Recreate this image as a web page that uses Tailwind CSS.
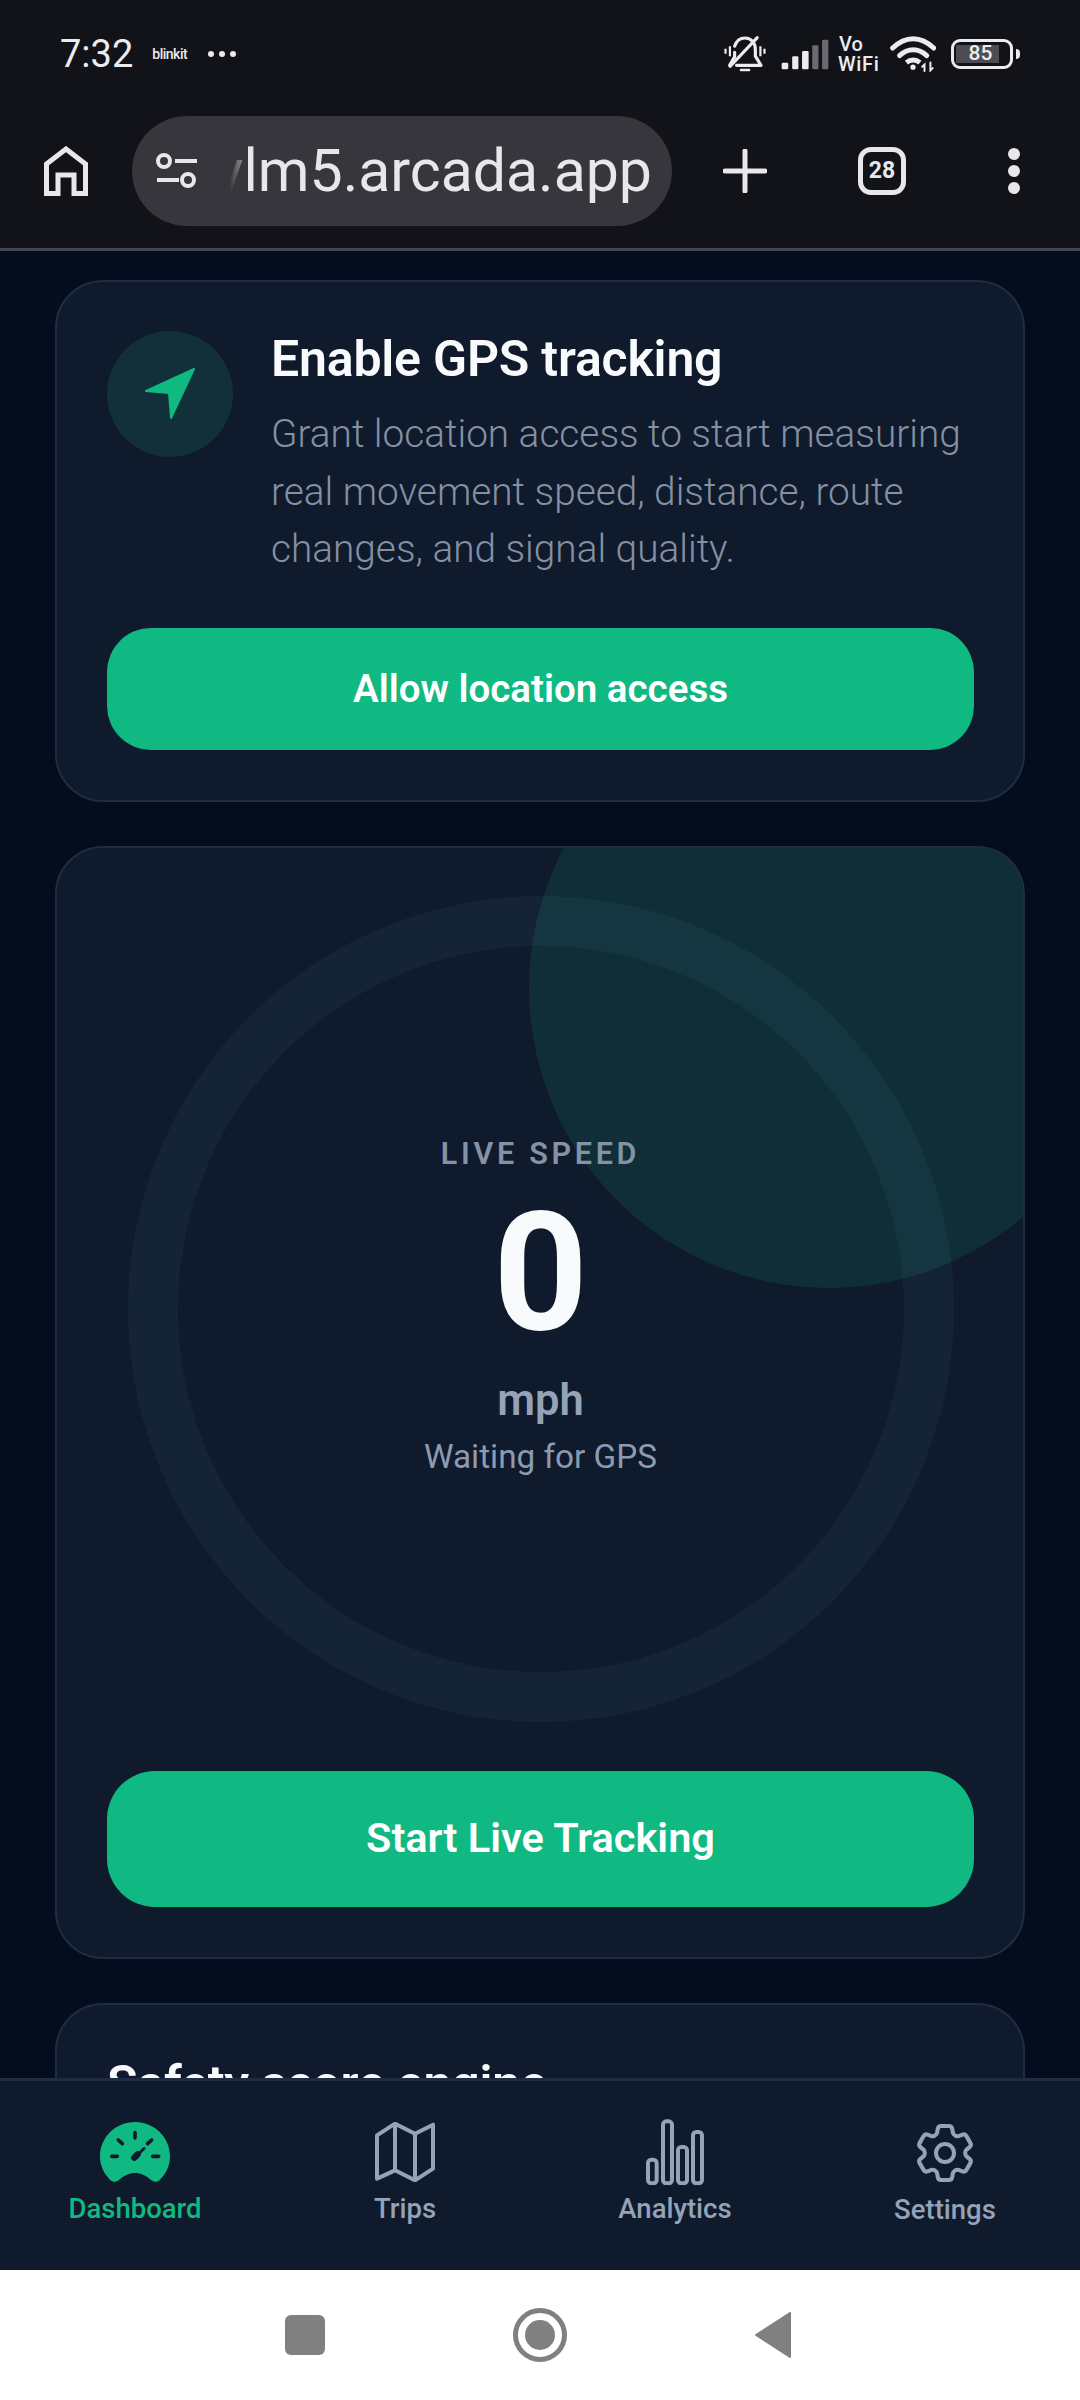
<!DOCTYPE html>
<html lang="en">
  <head>
    <meta charset="UTF-8" />
    <meta name="viewport" content="width=device-width, initial-scale=1.0" />
    <title>Dashboard</title>
    <script src="https://cdn.jsdelivr.net/npm/@tailwindcss/browser@4"></script>
  </head>
  <body class="bg-white">
    <div class="flex h-[2400px] w-[1080px] flex-col overflow-hidden font-[Roboto,sans-serif]">
      <!-- STATUS BAR -->
      <div class="box-border flex h-[100px] shrink-0 items-center bg-[#121318] pt-[8px] pl-[60px] text-[#ececee]">
        <span class="text-[38px] leading-none">7:32</span>
        <span class="ml-[19px] text-[14px] font-medium tracking-[-0.5px]">blinkit</span>
        <div class="ml-[21px] flex gap-[5px]">
          <span class="size-[6px] rounded-full bg-[#ececee]"></span>
          <span class="size-[6px] rounded-full bg-[#ececee]"></span>
          <span class="size-[6px] rounded-full bg-[#ececee]"></span>
        </div>
        <svg class="ml-auto" width="44" height="38" viewBox="365 105 140 120" fill="none" stroke="#ececee" stroke-width="10" stroke-linecap="round" stroke-linejoin="round">
          <path d="M402 140C408 122 420 114 435 114C455 114 468 130 468 152V172L486 201H408" />
          <path d="M402 160V174L386 201" />
          <path d="M388 204L474 113" />
          <path d="M422 216H448" stroke-width="8" />
          <path d="M373 148V164M387 140V172M484 140V172M497 148V164" stroke-width="7" stroke-linecap="butt" />
        </svg>
        <svg class="ml-[14px]" width="48" height="31" viewBox="543 116 146 94" fill="#ececee">
          <rect x="545" y="188" width="20" height="20" rx="4" />
          <rect x="577" y="168" width="19" height="40" rx="4" />
          <rect x="607" y="152" width="20" height="56" rx="4" />
          <rect x="638" y="135" width="19" height="73" rx="4" fill="#6a6b70" />
          <rect x="668" y="118" width="19" height="90" rx="4" fill="#6a6b70" />
        </svg>
        <div class="ml-[9px] flex w-[42px] flex-col text-[20px] leading-[20px] font-medium">
          <span class="pl-[1px]">Vo</span>
          <span class="tracking-[0.7px]">WiFi</span>
        </div>
        <svg class="ml-[10px]" width="46" height="36" viewBox="868 110 140 108" fill="none" stroke="#ececee" stroke-width="15" stroke-linecap="round">
          <path d="M876 146C915 108 962 108 1001 146" />
          <path d="M897 169C922 145 955 145 980 169" />
          <path d="M918 190C930 180 947 180 959 190" stroke-linecap="butt" />
          <circle cx="938" cy="204" r="8" fill="#ececee" stroke="none" />
          <path d="M973 216V196L966 203M991 190V214L998 207" stroke-width="6" />
        </svg>
        <div class="relative mr-[67px] ml-[15px] box-border flex h-[30px] w-[62px] items-center rounded-[9px] border-[3px] border-[#ececee]">
          <div class="ml-[2px] flex h-[18px] w-[43px] items-center justify-center bg-[#4c4d53] pl-[6px] text-[21px] font-medium">85</div>
          <span class="absolute right-[-10px] h-[10px] w-[4px] rounded-r-full bg-[#ececee]"></span>
        </div>
      </div>

      <!-- BROWSER TOOLBAR -->
      <div class="box-border flex h-[151px] shrink-0 items-center border-b-[3px] border-[#44454e] bg-[#121318] pb-[6px] pl-[44px] text-[#e8e8ec]">
        <svg width="44" height="50" viewBox="0 0 44 50" fill="none" stroke="#e8e8ec" stroke-width="5">
          <path d="M2.5 47.5V18L22 3L41.5 18V47.5H30V29H14V47.5Z" />
        </svg>
        <div class="relative ml-[44px] flex h-[110px] w-[540px] items-center rounded-full bg-[#36363c]">
          <svg class="ml-[23px] shrink-0" width="44" height="40" viewBox="0 0 44 40" fill="none" stroke="#e8e8ec" stroke-width="4">
            <circle cx="9" cy="10" r="6" />
            <path d="M20 10H42M2 29H24" />
            <circle cx="33" cy="29" r="6" />
          </svg>
          <div class="relative ml-[23px] flex h-[80px] w-[430px] items-center justify-end overflow-hidden">
            <span class="text-[59px] whitespace-nowrap">vlm5.arcada.app</span>
            <span class="absolute top-0 left-0 h-full w-[26px] bg-gradient-to-r from-[#36363c] from-30% to-[#36363c]/30"></span>
          </div>
        </div>
        <svg class="ml-[51px]" width="44" height="44" viewBox="0 0 44 44" stroke="#e8e8ec" stroke-width="5" stroke-linecap="round">
          <path d="M22 2V42M2 22H42" />
        </svg>
        <div class="ml-[91px] flex size-[48px] items-center justify-center rounded-[13px] border-[5px] border-[#e8e8ec] text-[23px] font-bold">28</div>
        <div class="ml-[102px] flex flex-col gap-[5px]">
          <span class="size-[12px] rounded-full bg-[#e8e8ec]"></span>
          <span class="size-[12px] rounded-full bg-[#e8e8ec]"></span>
          <span class="size-[12px] rounded-full bg-[#e8e8ec]"></span>
        </div>
      </div>

      <!-- PAGE CONTENT -->
      <main class="flex min-h-0 flex-1 flex-col gap-[44px] overflow-hidden bg-[#040d1d] px-[55px] pt-[29px]">
        <!-- GPS card -->
        <section class="box-border h-[522px] shrink-0 rounded-[48px] border-2 border-[#1e2d45] bg-[#0f1a2c] pt-[49px] pr-[49px] pl-[50px]">
          <div class="flex gap-[38px]">
            <div class="flex size-[126px] shrink-0 items-center justify-center rounded-full bg-[#11303a]">
              <svg width="52" height="52" viewBox="0 0 52 52" fill="#10b981" stroke="#10b981" stroke-width="2" stroke-linejoin="round">
                <path d="M50 1L2 23L25 25L27 50Z" />
              </svg>
            </div>
            <div class="min-w-0">
              <h2 class="mt-[-5px] text-[50px] leading-[66px] font-semibold tracking-[-0.2px] text-[#f8fafc]">Enable GPS tracking</h2>
              <p class="mt-[13px] text-[38.75px] leading-[57.5px] font-light text-[#8490a3]">Grant location access to start measuring real movement speed, distance, route changes, and signal quality.</p>
            </div>
          </div>
          <button class="mt-[50px] h-[122px] w-full rounded-[44px] bg-[#10b981] text-[38.5px] font-semibold text-white">Allow location access</button>
        </section>

        <!-- Live speed card -->
        <section class="relative box-border h-[1113px] shrink-0 overflow-hidden rounded-[48px] border-2 border-[#1e2d45] bg-[#0f1a2c] pt-[48px] pr-[49px] pl-[50px]">
          <div class="absolute top-[-160px] right-[-106px] size-[600px] rounded-full bg-[#10b981]/13"></div>
          <div class="relative mx-auto box-border flex size-[826px] flex-col items-center rounded-full border-[50px] border-[#7dd3fc]/5 pt-[186px] text-[#94a3b8]">
            <span class="text-[30.5px] leading-[44px] font-semibold tracking-[3.7px] text-[#8492a6]">LIVE SPEED</span>
            <span class="mt-[2px] text-[165px] leading-[190px] font-bold text-[#f8fafc]">0</span>
            <span class="mt-[3px] text-[43.5px] leading-[60px] font-semibold">mph</span>
            <span class="mt-[3px] text-[33.3px] leading-[46px] text-[#8d9bb0]">Waiting for GPS</span>
          </div>
          <button class="relative mt-[49px] h-[136px] w-full rounded-[48px] bg-[#10b981] pb-[2px] text-[41.5px] font-semibold text-white">Start Live Tracking</button>
        </section>

        <!-- Safety card, cut off by the tab bar -->
        <section class="box-border h-[300px] shrink-0 rounded-t-[48px] border-2 border-[#1e2d45] bg-[#0f1a2c] px-[50px] pt-[46px]">
          <h2 class="text-[50px] leading-[66px] font-semibold tracking-[-0.2px] text-[#f8fafc]">Safety score engine</h2>
        </section>
      </main>

      <!-- TAB BAR -->
      <nav class="box-border grid h-[192px] shrink-0 grid-cols-4 border-t-[3px] border-[#1e2d45] bg-[#0f1b2d] text-[27.5px] font-medium text-[#94a3b8]">
        <a class="flex flex-col items-center pt-[41px] text-[#10b981]">
          <svg width="70" height="60" viewBox="180 97 210 180">
            <path fill="#10b981" d="M285 97C227 97 180 143 180 200C180 228 192 253 210 270C218 278 228 278 236 272C250 258 268 250 285 250C302 250 320 258 334 272C342 278 352 278 360 270C378 253 390 228 390 200C390 143 343 97 285 97Z" />
            <g stroke="#0f1b2d" stroke-width="11" stroke-linecap="round">
              <path d="M285 129V145M235 151L247 162M335 151L323 162M215 200H232M338 200H356" />
              <path d="M283 204L313 176" stroke-width="8" />
              <path d="M283 204L293 194" stroke-width="19" />
            </g>
          </svg>
          <span class="mt-[7px] leading-[40px]">Dashboard</span>
        </a>
        <a class="flex flex-col items-center pt-[41px]">
          <svg width="60" height="60" viewBox="1005 100 180 180" fill="none" stroke="#94a3b8" stroke-width="12" stroke-linejoin="round">
            <path d="M1011 140L1065 105L1125 135L1179 108V240L1125 275L1065 245L1011 270Z" />
            <path d="M1065 105V245M1125 135V275" />
          </svg>
          <span class="mt-[7px] leading-[40px]">Trips</span>
        </a>
        <a class="flex flex-col items-center pt-[38px]">
          <svg width="58" height="66" viewBox="139 90 174 198" fill="none" stroke="#94a3b8" stroke-width="12">
            <rect x="145" y="212" width="26" height="71" rx="10" />
            <rect x="190" y="97" width="27" height="186" rx="10" />
            <rect x="235" y="174" width="27" height="109" rx="10" />
            <rect x="280" y="129" width="27" height="154" rx="10" />
          </svg>
          <span class="mt-[4px] leading-[40px]">Analytics</span>
        </a>
        <a class="flex flex-col items-center pt-[36px]">
          <svg width="72" height="72" viewBox="0 0 24 24" fill="none" stroke="#94a3b8" stroke-width="1.35" stroke-linecap="round" stroke-linejoin="round">
            <path d="M9.594 3.94c.09-.542.56-.94 1.11-.94h2.593c.55 0 1.02.398 1.11.94l.213 1.281c.063.374.313.686.645.87.074.04.147.083.22.127.325.196.72.257 1.075.124l1.217-.456a1.125 1.125 0 0 1 1.37.49l1.296 2.247a1.125 1.125 0 0 1-.26 1.431l-1.003.827c-.293.241-.438.613-.43.992a7.723 7.723 0 0 1 0 .255c-.008.378.137.75.43.991l1.004.827c.424.35.534.955.26 1.43l-1.298 2.247a1.125 1.125 0 0 1-1.369.491l-1.217-.456c-.355-.133-.75-.072-1.076.124a6.47 6.47 0 0 1-.22.128c-.331.183-.581.495-.644.869l-.213 1.281c-.09.543-.56.94-1.11.94h-2.594c-.55 0-1.019-.398-1.11-.94l-.213-1.281c-.062-.374-.312-.686-.644-.87a6.52 6.52 0 0 1-.22-.127c-.325-.196-.72-.257-1.076-.124l-1.217.456a1.125 1.125 0 0 1-1.369-.49l-1.297-2.247a1.125 1.125 0 0 1 .26-1.431l1.004-.827c.292-.24.437-.613.43-.991a6.932 6.932 0 0 1 0-.255c.007-.38-.138-.751-.43-.992l-1.004-.827a1.125 1.125 0 0 1-.26-1.43l1.297-2.247a1.125 1.125 0 0 1 1.37-.491l1.216.456c.356.133.751.072 1.076-.124.072-.044.146-.086.22-.128.332-.183.582-.495.644-.869l.214-1.28Z" />
            <path d="M15 12a3 3 0 1 1-6 0 3 3 0 0 1 6 0Z" />
          </svg>
          <span class="mt-[1px] leading-[40px]">Settings</span>
        </a>
      </nav>

      <!-- ANDROID NAV -->
      <div class="flex h-[130px] shrink-0 items-center justify-center gap-[188px] bg-white pr-[5px]">
        <span class="h-[40px] w-[40px] rounded-[6px] bg-[#808080]"></span>
        <svg width="54" height="54" viewBox="0 0 54 54">
          <circle cx="27" cy="27" r="24.5" fill="none" stroke="#808080" stroke-width="5" />
          <circle cx="27" cy="27" r="15" fill="#808080" />
        </svg>
        <svg width="36" height="46" viewBox="0 0 36 46">
          <path fill="#808080" stroke="#808080" stroke-width="2" stroke-linejoin="round" d="M35 1V45L1 23Z" />
        </svg>
      </div>
    </div>
  </body>
</html>
